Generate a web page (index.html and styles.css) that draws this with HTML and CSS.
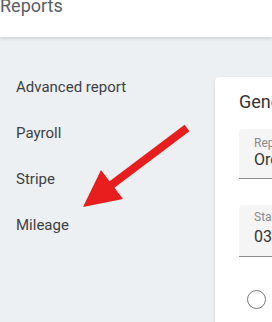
FILE: index.html
```html
<!DOCTYPE html>
<html lang="en">
<head>
    <meta charset="UTF-8">
    <meta name="viewport" content="width=device-width, initial-scale=1.0">
    <title>Reports</title>
    <link rel="stylesheet" href="styles.css">
</head>
<body>
    <header class="topbar">
        <h1>Reports</h1>
    </header>
    <div class="page">
        <nav class="side-nav">
            <a href="#">Advanced report</a>
            <a href="#">Payroll</a>
            <a href="#">Stripe</a>
            <a href="#">Mileage</a>
        </nav>
        <section class="card">
            <h2>Generate report</h2>
            <div class="field">
                <span class="field-label">Report type</span>
                <span class="field-value">Orders</span>
            </div>
            <div class="field field-date">
                <span class="field-label">Start date</span>
                <span class="field-value">03/01/2024</span>
            </div>
            <div class="radio-row">
                <span class="radio"></span>
            </div>
        </section>
    </div>

    <svg class="pointer" width="272" height="322" viewBox="0 0 272 322">
        <line x1="187" y1="128" x2="110" y2="186" stroke="#e81d1d" stroke-width="8"/>
        <polygon points="83,207 101,170 123,199" fill="#e81d1d"/>
    </svg>
</body>
</html>
```

FILE: styles.css
```css
body {
    margin: 0;
    height: 322px;
    overflow: hidden;
    background-color: #edf0f3;
    font-family: Roboto, "Noto Sans", sans-serif;
    position: relative;
}
.topbar {
    height: 37px;
    background: #fff;
    box-shadow: 0 2px 3px rgba(0, 0, 0, 0.12);
    position: relative;
    z-index: 1;
    overflow: hidden;
}
.topbar h1 {
    margin: -5px 0 0 0;
    font-size: 18px;
    font-weight: 400;
    color: #5a5d61;
}
.page {
    display: flex;
}
.side-nav {
    width: 215px;
    flex: none;
    padding-top: 27px;
    display: flex;
    flex-direction: column;
}
.side-nav a {
    height: 46px;
    line-height: 46px;
    padding-left: 16px;
    font-size: 15px;
    color: #3d4043;
    text-decoration: none;
}
.card {
    flex: none;
    width: 300px;
    margin-top: 40px;
    height: 300px;
    background: #fff;
    border-radius: 4px;
    box-shadow: 0 1px 3px rgba(0, 0, 0, 0.12);
    padding: 0 23px;
}
.card h2 {
    margin: 14px 0 0 1px;
    font-size: 18px;
    font-weight: 400;
    color: #333;
}
.field {
    margin-top: 17px;
    background: #f5f5f5;
    border-bottom: 1px solid #8c8c8c;
    border-radius: 4px 4px 0 0;
    padding: 7px 16px 0 15px;
    margin-left: 1px;
    display: flex;
    flex-direction: column;
    height: 42px;
}
.field-date {
    margin-top: 26px;
    padding-top: 5px;
    height: 46px;
}
.field-label {
    font-size: 12px;
    line-height: 14px;
    color: #8a8a8a;
}
.field-value {
    font-size: 16px;
    line-height: 19px;
    color: #333;
    white-space: nowrap;
}
.field-date .field-value {
    margin-top: 3px;
}
.radio-row {
    padding: 33px 0 0 9px;
}
.radio {
    display: block;
    width: 17px;
    height: 17px;
    border: 1.5px solid #7a7a7a;
    border-radius: 50%;
}
.pointer {
    position: absolute;
    left: 0;
    top: 0;
    pointer-events: none;
}
```
